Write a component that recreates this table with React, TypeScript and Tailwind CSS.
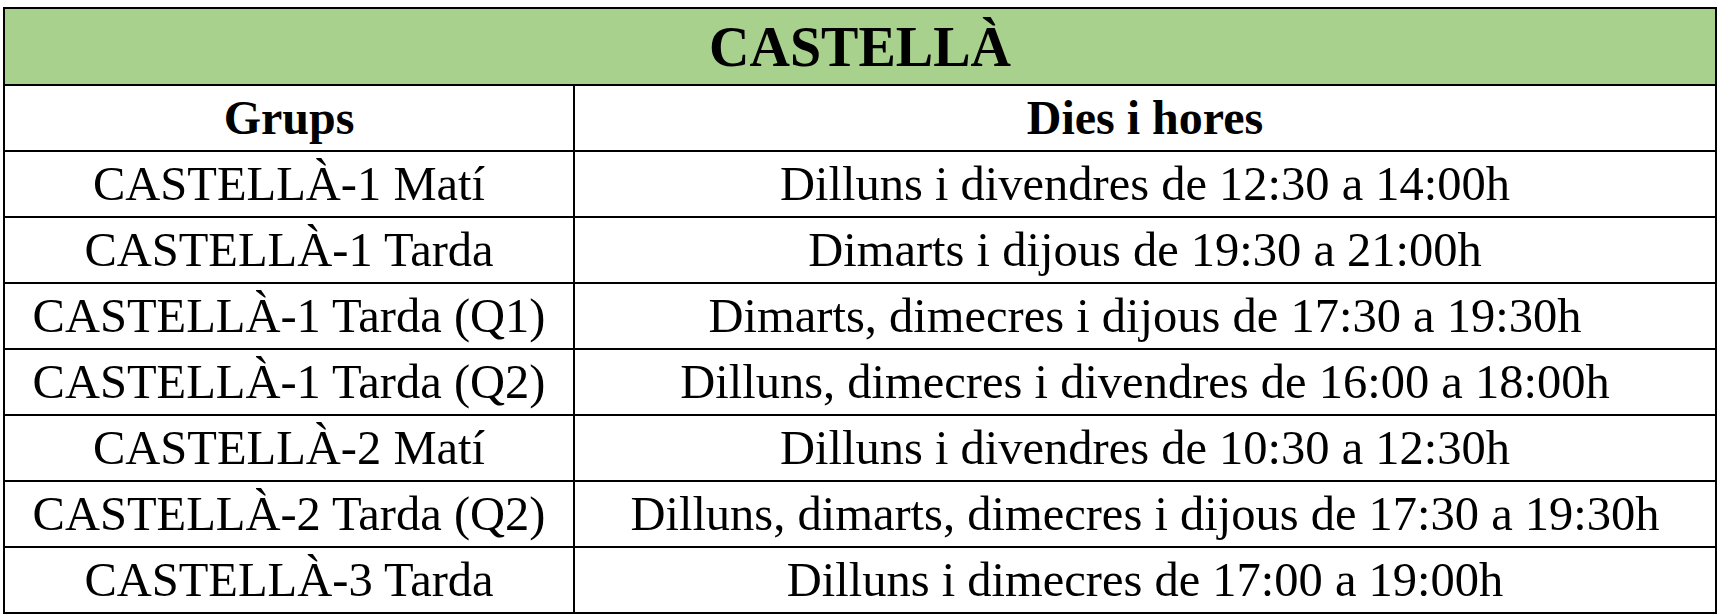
import React from "react";

const rows: [string, string][] = [
  ["CASTELLÀ-1 Matí", "Dilluns i divendres de 12:30 a 14:00h"],
  ["CASTELLÀ-1 Tarda", "Dimarts i dijous de 19:30 a 21:00h"],
  ["CASTELLÀ-1 Tarda (Q1)", "Dimarts, dimecres i dijous de 17:30 a 19:30h"],
  ["CASTELLÀ-1 Tarda (Q2)", "Dilluns, dimecres i divendres de 16:00 a 18:00h"],
  ["CASTELLÀ-2 Matí", "Dilluns i divendres de 10:30 a 12:30h"],
  ["CASTELLÀ-2 Tarda (Q2)", "Dilluns, dimarts, dimecres i dijous de 17:30 a 19:30h"],
  ["CASTELLÀ-3 Tarda", "Dilluns i dimecres de 17:00 a 19:00h"],
];

export default function App() {
  return (
    <div
      className="w-[1720px] h-[616px] bg-white pt-[7px] pl-[3px] text-black"
      style={{ fontFamily: '"Liberation Serif", "Times New Roman", serif' }}
    >
      <div className="w-[1714px] border-2 border-black">
        <div className="h-[75px] bg-[#a9d18e] flex items-center justify-center text-[56px] font-bold leading-none">
          CASTELLÀ
        </div>
        <div className="flex h-[66px] border-t-2 border-black text-[48px] font-bold leading-none">
          <div className="w-[570px] border-r-2 border-black flex items-center justify-center">
            Grups
          </div>
          <div className="flex-1 flex items-center justify-center">Dies i hores</div>
        </div>
        {rows.map(([g, d]) => (
          <div key={g} className="flex h-[66px] border-t-2 border-black text-[48.5px] leading-none">
            <div className="w-[570px] border-r-2 border-black flex items-center justify-center whitespace-nowrap">
              {g}
            </div>
            <div className="flex-1 flex items-center justify-center whitespace-nowrap">{d}</div>
          </div>
        ))}
      </div>
    </div>
  );
}
